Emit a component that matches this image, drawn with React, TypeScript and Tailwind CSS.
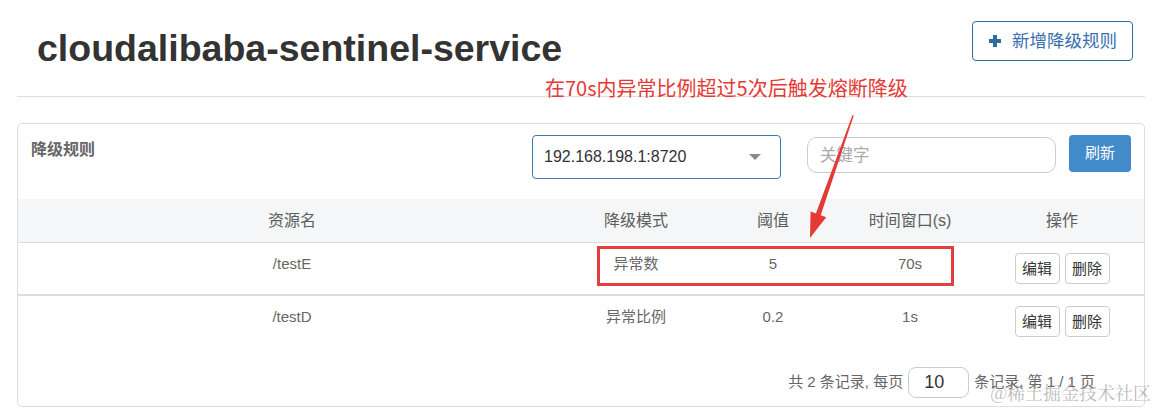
import React from 'react';

const rules = [
  { resource: '/testE', mode: '异常数', count: '5', window: '70s' },
  { resource: '/testD', mode: '异常比例', count: '0.2', window: '1s' },
];

const SmallButton: React.FC<{ label: string }> = ({ label }) => (
  <button className="h-[31px] w-[45px] rounded-[4px] border border-[#ccc] bg-white text-[15px] text-[#333]">
    {label}
  </button>
);

const App: React.FC = () => {
  return (
    <div className="relative h-[408px] w-[1157px] overflow-hidden bg-white font-['Liberation_Sans','Noto_Sans_CJK_SC',sans-serif]">
      <div className="pl-[17px] pr-[12px]">
        {/* page header */}
        <div className="flex h-[97px] items-start justify-between border-b border-[#ddd]">
          <h1 className="ml-[20px] mt-[26px] text-[37.5px] font-bold leading-[44px] text-[#333]">
            cloudalibaba-sentinel-service
          </h1>
          <button className="mr-[12px] mt-[21px] flex h-[40px] w-[161px] items-center gap-[11px] rounded-[4px] border border-[#2e6da4] bg-white pl-[16px] text-[17.5px] text-[#3a70ad]">
            <svg width="12" height="12" viewBox="0 0 12 12">
              <rect x="4" y="0" width="4" height="12" fill="#2e6da4" />
              <rect x="0" y="4" width="12" height="4" fill="#2e6da4" />
            </svg>
            新增降级规则
          </button>
        </div>

        {/* panel */}
        <div className="mt-[26px] h-[284px] rounded-[5px] border border-[#ddd]">
          <div className="flex h-[75px] items-start justify-between">
            <div className="ml-[13px] mt-[16px] text-[16px] font-bold leading-[20px] text-[#666]">降级规则</div>
            <div className="mr-[13px] flex items-start">
              <div className="mt-[11px] flex h-[44px] w-[249px] items-center justify-between rounded-[4px] border border-[#3d79b5] pl-[11px] pr-[19px] text-[16px] text-[#333]">
                <span>192.168.198.1:8720</span>
                <svg width="12" height="6" viewBox="0 0 12 6">
                  <polygon points="0,0 12,0 6,6" fill="#888" />
                </svg>
              </div>
              <div className="ml-[26px] mt-[13px] flex h-[36px] w-[249px] items-center rounded-[10px] border border-[#ccc] pl-[12px] text-[16.5px] text-[#aaa]">
                关键字
              </div>
              <button className="ml-[13px] mt-[11px] h-[37px] w-[62px] rounded-[4px] bg-[#428bca] text-[15px] text-white">
                刷新
              </button>
            </div>
          </div>

          {/* table */}
          <div className="grid h-[44px] grid-cols-[548px_140px_134px_140px_1fr] items-center border-b border-[#ddd] bg-[#f4f6f7] text-center text-[16px] text-[#5c5c5c]">
            <div>资源名</div>
            <div>降级模式</div>
            <div>阈值</div>
            <div>时间窗口(s)</div>
            <div>操作</div>
          </div>
          {rules.map((r, i) => (
            <div
              key={r.resource}
              className={
                i === 0
                  ? 'grid h-[53px] grid-cols-[548px_140px_134px_140px_1fr] items-start border-b-2 border-[#ddd] text-center text-[15px] leading-[20px] text-[#666]'
                  : 'grid h-[53px] grid-cols-[548px_140px_134px_140px_1fr] items-start text-center text-[15px] leading-[20px] text-[#666]'
              }
            >
              <div className="pt-[11px]">{r.resource}</div>
              <div className="pt-[11px]">{r.mode}</div>
              <div className="pt-[11px]">{r.count}</div>
              <div className="pt-[11px]">{r.window}</div>
              <div className="flex justify-center gap-[5px] pt-[10px]">
                <SmallButton label="编辑" />
                <SmallButton label="删除" />
              </div>
            </div>
          ))}

          {/* pagination */}
          <div className="flex items-center justify-end gap-[5px] pr-[49px] pt-[18px] text-[15px] text-[#666]">
            <span>共 2 条记录, 每页</span>
            <div className="flex h-[31px] w-[61px] items-center rounded-[8px] border border-[#ccc] pl-[15px] text-[18px] text-[#333]">
              10
            </div>
            <span>条记录, 第 1 / 1 页</span>
          </div>
        </div>
      </div>

      {/* annotations laid over the page */}
      <div className="absolute left-[545px] top-[76px] text-[20px] leading-[24px] text-[#e53935] font-['Noto_Sans_CJK_SC',sans-serif]">
        在70s内异常比例超过5次后触发熔断降级
      </div>
      <div className="pointer-events-none absolute left-[597px] top-[246px] h-[40px] w-[357px] border-[3px] border-[#e53e3e]" />
      <svg className="pointer-events-none absolute left-0 top-0" width="1157" height="408">
        <polygon
          points="852.5,115 853.8,115.4 820.7,215.2 826.2,217.2 810,238 810.6,211.6 815.9,213.6"
          fill="#e53935"
        />
      </svg>
      <div className="pointer-events-none absolute bottom-[5px] right-[6px] text-[18px] leading-[22px] text-[#8a8a8a]/60 font-['Noto_Serif_CJK_SC','Noto_Sans_CJK_SC',serif]">
        @稀土掘金技术社区
      </div>
    </div>
  );
};

export default App;
